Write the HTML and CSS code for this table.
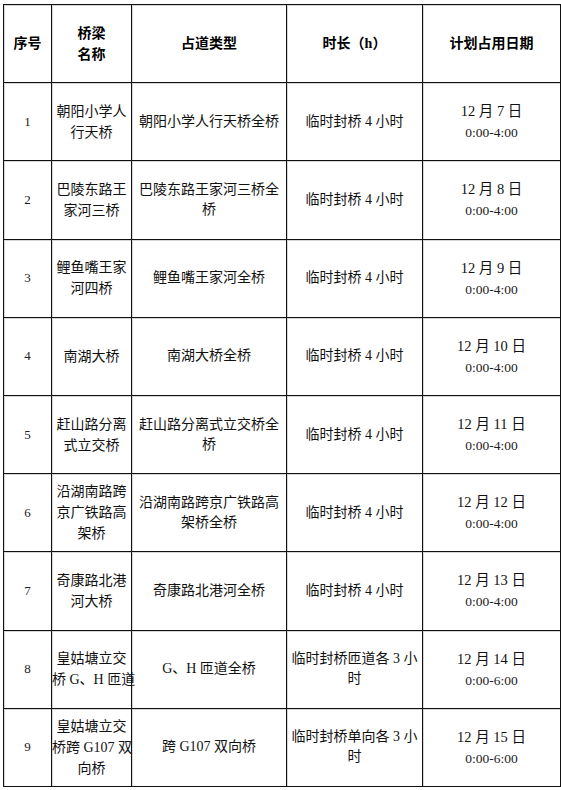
FILE: index.html
```html
<!DOCTYPE html>
<html lang="zh-CN">
<head>
<meta charset="utf-8">
<title>桥梁占道计划</title>
<link rel="stylesheet" href="styles.css">
</head>
<body>
<table class="plan">
  <colgroup>
    <col class="c-no">
    <col class="c-name">
    <col class="c-type">
    <col class="c-dur">
    <col class="c-date">
  </colgroup>
  <thead>
    <tr>
      <th>序号</th>
      <th>桥梁<br>名称</th>
      <th>占道类型</th>
      <th>时长（h）</th>
      <th>计划占用日期</th>
    </tr>
  </thead>
  <tbody>
    <tr>
      <td class="no">1</td>
      <td class="name">朝阳小学人<br>行天桥</td>
      <td>朝阳小学人行天桥全桥</td>
      <td>临时封桥 4 小时</td>
      <td class="date"><span class="day">12 月 7 日</span><span class="time">0:00-4:00</span></td>
    </tr>
    <tr>
      <td class="no">2</td>
      <td class="name">巴陵东路王<br>家河三桥</td>
      <td>巴陵东路王家河三桥全<br>桥</td>
      <td>临时封桥 4 小时</td>
      <td class="date"><span class="day">12 月 8 日</span><span class="time">0:00-4:00</span></td>
    </tr>
    <tr>
      <td class="no">3</td>
      <td class="name">鲤鱼嘴王家<br>河四桥</td>
      <td>鲤鱼嘴王家河全桥</td>
      <td>临时封桥 4 小时</td>
      <td class="date"><span class="day">12 月 9 日</span><span class="time">0:00-4:00</span></td>
    </tr>
    <tr>
      <td class="no">4</td>
      <td class="name">南湖大桥</td>
      <td>南湖大桥全桥</td>
      <td>临时封桥 4 小时</td>
      <td class="date"><span class="day">12 月 10 日</span><span class="time">0:00-4:00</span></td>
    </tr>
    <tr>
      <td class="no">5</td>
      <td class="name">赶山路分离<br>式立交桥</td>
      <td>赶山路分离式立交桥全<br>桥</td>
      <td>临时封桥 4 小时</td>
      <td class="date"><span class="day">12 月 11 日</span><span class="time">0:00-4:00</span></td>
    </tr>
    <tr>
      <td class="no">6</td>
      <td class="name">沿湖南路跨<br>京广铁路高<br>架桥</td>
      <td>沿湖南路跨京广铁路高<br>架桥全桥</td>
      <td>临时封桥 4 小时</td>
      <td class="date"><span class="day">12 月 12 日</span><span class="time">0:00-4:00</span></td>
    </tr>
    <tr>
      <td class="no">7</td>
      <td class="name">奇康路北港<br>河大桥</td>
      <td>奇康路北港河全桥</td>
      <td>临时封桥 4 小时</td>
      <td class="date"><span class="day">12 月 13 日</span><span class="time">0:00-4:00</span></td>
    </tr>
    <tr>
      <td class="no">8</td>
      <td class="name">皇姑塘立交<br>桥 G、H 匝道</td>
      <td>G、H 匝道全桥</td>
      <td>临时封桥匝道各 3 小<br>时</td>
      <td class="date"><span class="day">12 月 14 日</span><span class="time">0:00-6:00</span></td>
    </tr>
    <tr>
      <td class="no">9</td>
      <td class="name">皇姑塘立交<br>桥跨 G107 双<br>向桥</td>
      <td>跨 G107 双向桥</td>
      <td>临时封桥单向各 3 小<br>时</td>
      <td class="date"><span class="day">12 月 15 日</span><span class="time">0:00-6:00</span></td>
    </tr>
  </tbody>
</table>
</body>
</html>
```

FILE: styles.css
```css
html, body {
  margin: 0;
  padding: 0;
  background: #ffffff;
}

body {
  padding: 4px 0 0 3px;
  font-family: "Liberation Serif", "Noto Sans CJK SC", serif;
  color: #111;
}

.plan {
  border-collapse: collapse;
  table-layout: fixed;
  width: 557px;
}

.c-no { width: 48px; }
.c-name { width: 80px; }
.c-type { width: 155px; }
.c-dur { width: 136px; }
.c-date { width: 138px; }

.plan th,
.plan td {
  border: 1px solid #111;
  box-shadow: inset 1px 1px 0 #d6d6d6;
  text-align: center;
  vertical-align: middle;
  padding: 0 3px;
  height: 78.2px;
  box-sizing: border-box;
}

.plan th {
  font-family: "Liberation Serif", "Noto Sans CJK SC", serif;
  font-weight: 700;
  font-size: 14px;
  line-height: 21px;
  color: #000;
}

.plan td {
  font-size: 14px;
  line-height: 20px;
  color: #111;
}

.plan td.no {
  font-size: 13px;
  color: #222;
}

.plan td.name {
  padding: 0;
  white-space: nowrap;
  line-height: 21px;
}

.date .day,
.date .time {
  display: block;
}

.date .day {
  font-size: 14.5px;
  line-height: 22px;
}

.date .time {
  font-size: 13.5px;
  line-height: 21px;
  color: #222;
}
```
